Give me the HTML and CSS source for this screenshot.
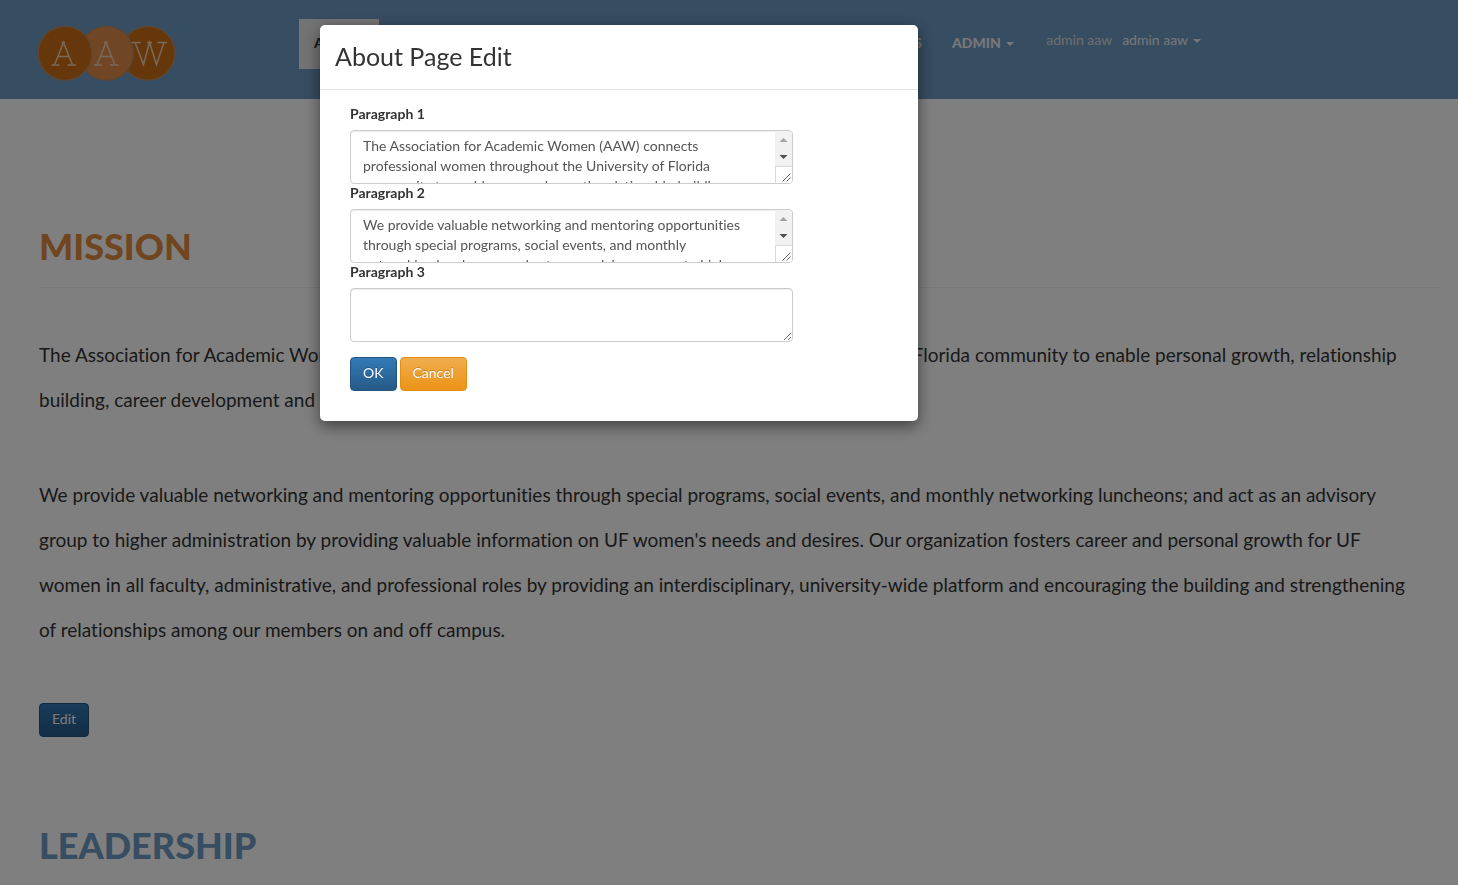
FILE: index.html
```html
<!DOCTYPE html>
<html lang="en">
<head>
<meta charset="utf-8">
<title>About - AAW</title>
<link rel="stylesheet" href="styles.css">
</head>
<body>
<header class="navbar">
  <a class="brand" href="#" aria-label="AAW home">
    <svg class="logo" viewBox="0 0 138 56" aria-hidden="true">
      <g stroke="#bd8c60" stroke-width="1.4">
        <circle cx="110" cy="28.300" r="26.800" fill="#cc6e14"/>
        <circle cx="68.500" cy="28.300" r="26.800" fill="#e08d48"/>
        <circle cx="27" cy="28.300" r="26.800" fill="#cc6e14"/>
      </g>
      <g fill="none" stroke="#f2d3b4" stroke-width="1.5">
        <path id="a" d="M13.500 40h8M29.500 40h8.500M16.500 40L25.500 17.500L34.500 40M23.500 17.500h3.500M20 31.500h11"/>
        <use href="#a" x="42.500"/>
        <path d="M93.500 17.500h9.500M119.500 17.500h9.500M97 17.500l8.500 22L111.500 17.500l7 22L126 17.500M109 17.500h5"/>
      </g>
    </svg>
  </a>
  <nav class="nav" aria-label="Main">
    <a class="nav-link active" href="#">ABOUT</a>
    <a class="nav-link events" href="#">EVENTS</a>
    <a class="nav-link" href="#">ADMIN <span class="caret"></span></a>
  </nav>
  <div class="account">
    <span class="user">admin aaw</span>
    <a class="user-menu" href="#">admin aaw <span class="caret"></span></a>
  </div>
</header>
<main class="page">
  <h1 class="heading mission">MISSION</h1>
  <p class="text">The Association for Academic Women (AAW) connects professional women throughout the University of Florida community to enable personal growth, relationship<br>building, career development and mentoring.</p>
  <p class="text">We provide valuable networking and mentoring opportunities through special programs, social events, and monthly networking luncheons; and act as an advisory<br>group to higher administration by providing valuable information on UF women's needs and desires. Our organization fosters career and personal growth for UF<br>women in all faculty, administrative, and professional roles by providing an interdisciplinary, university-wide platform and encouraging the building and strengthening<br>of relationships among our members on and off campus.</p>
  <button class="btn primary" type="button">Edit</button>
  <h2 class="heading leadership">LEADERSHIP</h2>
</main>
<div class="backdrop">
  <section class="modal" role="dialog" aria-modal="true" aria-labelledby="modal-title">
    <div class="modal-header"><h2 class="modal-title" id="modal-title">About Page Edit</h2></div>
    <form class="modal-body">
      <label class="label" for="p1">Paragraph 1</label>
      <div class="field-box">
        <textarea class="field scrolling" id="p1" rows="2">The Association for Academic Women (AAW) connects professional women throughout the University of Florida community to enable personal growth, relationship building, career development and mentoring.</textarea>
        <svg class="scrollbar" viewBox="0 0 17 52" aria-hidden="true"><path fill="#f1f1f1" d="M0 0h17v35H0z"/><path fill="#a3a3a3" d="M4.500 11h8l-4-4z"/><path fill="#505050" d="M4.500 24h8l-4 4z"/><path fill="#fff" stroke="#d9d9d9" d="M.5 53V35.500H18V53z"/><path fill="none" stroke="#666" d="M7.500 50.500l8-8M11.500 50.500l4-4"/></svg>
      </div>
      <label class="label" for="p2">Paragraph 2</label>
      <div class="field-box">
        <textarea class="field scrolling" id="p2" rows="2">We provide valuable networking and mentoring opportunities through special programs, social events, and monthly networking luncheons; and act as an advisory group to higher administration by providing valuable information.</textarea>
        <svg class="scrollbar" viewBox="0 0 17 52" aria-hidden="true"><path fill="#f1f1f1" d="M0 0h17v35H0z"/><path fill="#a3a3a3" d="M4.500 11h8l-4-4z"/><path fill="#505050" d="M4.500 24h8l-4 4z"/><path fill="#fff" stroke="#d9d9d9" d="M.5 53V35.500H18V53z"/><path fill="none" stroke="#666" d="M7.500 50.500l8-8M11.500 50.500l4-4"/></svg>
      </div>
      <label class="label" for="p3">Paragraph 3</label>
      <div class="field-box">
        <textarea class="field" id="p3" rows="2"></textarea>
      </div>
      <div class="actions">
        <button class="btn primary" type="button">OK</button>
        <button class="btn warning" type="button">Cancel</button>
      </div>
    </form>
  </section>
</div>
</body>
</html>
```
FILE: styles.css
```css
* { box-sizing: border-box; }
html { height: 100%; overflow: hidden; }
body {
  margin: 0;
  font: 14px/20px Lato, sans-serif;
  font-variant-ligatures: none;
  color: #333;
  background: #fff;
}
a { color: inherit; text-decoration: none; }
.navbar {
  display: flex;
  align-items: flex-start;
  padding: 19px 38px 18px;
  min-height: 99px;
  background: #6e9ac4;
}
.brand { padding-top: 6px; }
.logo { display: block; width: 138px; height: 56px; }
.nav { display: flex; margin-left: 123px; color: #eee; }
.nav-link { padding: 14px 15px 16px; font-weight: 900; }
.active { width: 80px; background: #e7e7e7; color: #333; }
.events { width: 558px; text-align: right; }
.caret {
  display: inline-block;
  margin-left: 2px;
  vertical-align: middle;
  border-top: 4px solid;
  border-left: 4px solid transparent;
  border-right: 4px solid transparent;
}
.account { display: flex; gap: 10px; padding: 11px 17px; color: #eee; }
.user { color: #ddd; }
.page { padding: 117px 19px 0 39px; }
.heading { margin: 0; font-size: 36px; line-height: 60px; font-weight: 900; }
.mission { padding-bottom: 11px; border-bottom: 1px solid #eee; color: #e18d43; }
.leadership { margin-top: 78px; color: #6e9ac4; }
.text { margin: 44px 0 50px; font-size: 19px; line-height: 45px; }
.text + .text { margin: 0 0 51px; }
.btn {
  height: 34px;
  padding: 5px 12px 7px;
  border: 1px solid;
  border-radius: 4px;
  font: inherit;
  color: #fff;
  text-shadow: 0 -1px 0 rgba(0, 0, 0, .2);
}
.primary { background: linear-gradient(#337ab7, #265a88); border-color: #245580; }
.warning { background: linear-gradient(#f0ad4e, #eb9316); border-color: #e38d13; }
.backdrop {
  position: fixed;
  inset: 0;
  padding: 25px 0 0 21.95%;
  background: rgba(0, 0, 0, .5);
}
.modal {
  width: 598px;
  max-width: 95%;
  border-radius: 5px;
  background: #fff;
  box-shadow: 0 5px 15px rgba(0, 0, 0, .5);
}
.modal-header { padding: 14px 15px 16px; border-bottom: 1px solid #e5e5e5; }
.modal-title { margin: 0; font-size: 25px; line-height: 34px; font-weight: 400; }
.modal-body { margin: 0; padding: 14px 30px 30px; }
.label { display: block; margin-bottom: 6px; font-weight: 700; }
.field-box { position: relative; width: 443px; max-width: 100%; margin-bottom: -1px; }
.field {
  display: block;
  width: 100%;
  height: 54px;
  padding: 5px 12px;
  border: 1px solid #ccc;
  border-radius: 4px;
  background: #fff;
  box-shadow: inset 0 1px 1px rgba(0, 0, 0, .075);
  font: inherit;
  color: #555;
  resize: vertical;
}
.scrolling { padding-right: 34px; }
.scrollbar {
  position: absolute;
  top: 1px;
  right: 1px;
  width: 17px;
  height: 52px;
  border-radius: 0 3px 3px 0;
  pointer-events: none;
}
.actions { display: flex; gap: 3px; margin-top: 16px; }
```
